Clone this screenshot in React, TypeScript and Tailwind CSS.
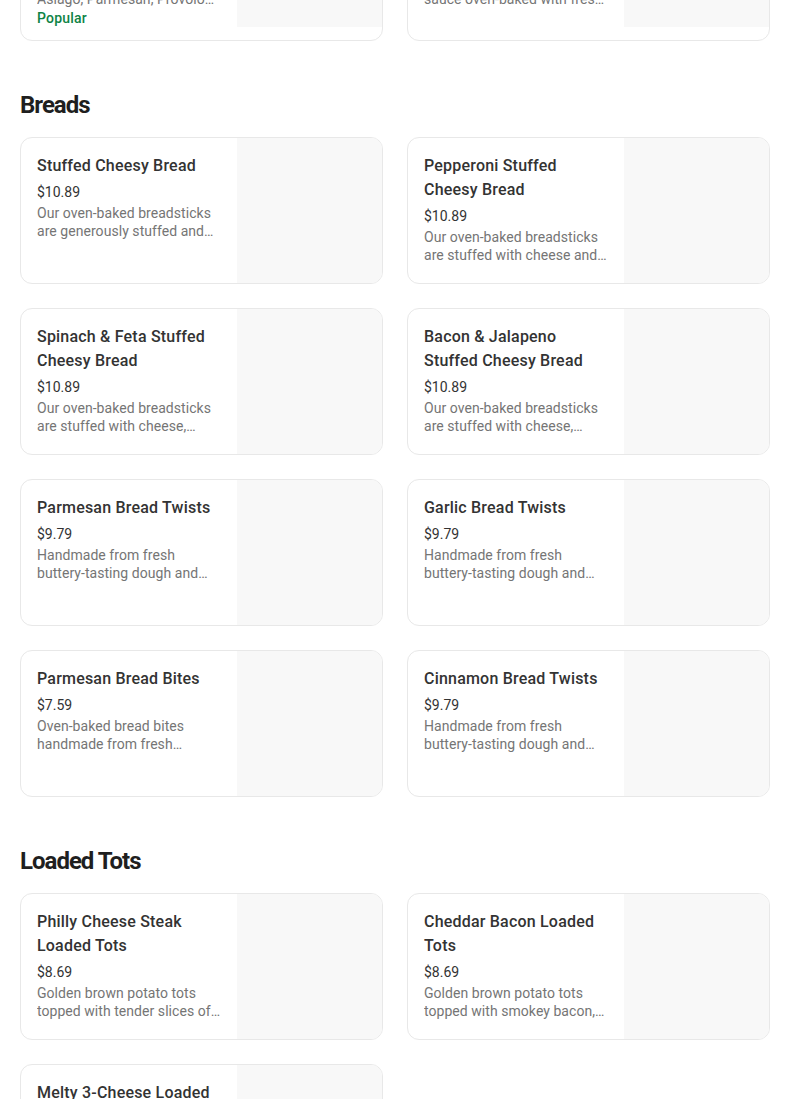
import React from "react";

interface Item {
  name: string;
  price: string;
  description: string;
  popular?: boolean;
}

interface Section {
  title?: string;
  items: Item[];
}

const partialRow: Item[] = [
  {
    name: "Wisconsin 6 Cheese Pizza",
    price: "$19.99",
    description:
      "Feta, mozzarella, cheddar & Asiago, Parmesan, Provolone cheese with oregano",
    popular: true,
  },
  {
    name: "Spinach & Feta Alfredo Pizza",
    price: "$19.99",
    description:
      "Made with a creamy Alfredo sauce oven-baked with fresh baby spinach, onions and feta",
  },
];

const sections: Section[] = [
  {
    title: "Breads",
    items: [
      {
        name: "Stuffed Cheesy Bread",
        price: "$10.89",
        description:
          "Our oven-baked breadsticks are generously stuffed and covered with a blend of 100% real mozzarella",
      },
      {
        name: "Pepperoni Stuffed Cheesy Bread",
        price: "$10.89",
        description:
          "Our oven-baked breadsticks are stuffed with cheese and pepperoni, covered in mozzarella",
      },
      {
        name: "Spinach & Feta Stuffed Cheesy Bread",
        price: "$10.89",
        description:
          "Our oven-baked breadsticks are stuffed with cheese, fresh spinach and feta",
      },
      {
        name: "Bacon & Jalapeno Stuffed Cheesy Bread",
        price: "$10.89",
        description:
          "Our oven-baked breadsticks are stuffed with cheese, smoked bacon and jalapeno peppers",
      },
      {
        name: "Parmesan Bread Twists",
        price: "$9.79",
        description:
          "Handmade from fresh buttery-tasting dough and baked to a golden brown",
      },
      {
        name: "Garlic Bread Twists",
        price: "$9.79",
        description:
          "Handmade from fresh buttery-tasting dough and baked to a golden brown",
      },
      {
        name: "Parmesan Bread Bites",
        price: "$7.59",
        description:
          "Oven-baked bread bites handmade from fresh buttery-tasting dough",
      },
      {
        name: "Cinnamon Bread Twists",
        price: "$9.79",
        description:
          "Handmade from fresh buttery-tasting dough and baked to a golden brown",
      },
    ],
  },
  {
    title: "Loaded Tots",
    items: [
      {
        name: "Philly Cheese Steak Loaded Tots",
        price: "$8.69",
        description:
          "Golden brown potato tots topped with tender slices of steak, onions and peppers",
      },
      {
        name: "Cheddar Bacon Loaded Tots",
        price: "$8.69",
        description:
          "Golden brown potato tots topped with smokey bacon, cheddar and ranch",
      },
      {
        name: "Melty 3-Cheese Loaded Tots",
        price: "$8.69",
        description:
          "Golden brown potato tots topped with a blend of three cheeses",
      },
    ],
  },
];

function MenuCard({ item }: { item: Item }) {
  return (
    <div className="flex min-h-[147px] overflow-hidden rounded-xl border border-[#e8e8e8] bg-white">
      <div className="flex-1 min-w-0 px-4 pt-4 pb-3">
        <div className="text-base leading-6 font-medium tracking-[0.2px] text-[#333]">
          {item.name}
        </div>
        <div className="mt-1 text-sm leading-5 text-[#333]">
          {item.price}
        </div>
        <div className="mt-[2px] text-sm leading-[18px] tracking-[0.05px] text-[#757575] line-clamp-2">
          {item.description}
        </div>
        {item.popular && (
          <div className="text-sm leading-5 font-medium tracking-[0.2px] text-[#0e8345]">
            Popular
          </div>
        )}
      </div>
      <div className="w-[145px] h-[145px] shrink-0 bg-[#f8f8f8]"></div>
    </div>
  );
}

export default function App() {
  return (
    <div
      className="min-h-screen bg-white overflow-hidden"
      style={{ fontFamily: "Roboto, 'Liberation Sans', sans-serif" }}
    >
      <div className="mx-5 max-w-[750px] mt-[-119px] pb-10">
        {/* previous section, scrolled mostly off screen */}
        <div className="grid grid-cols-2 gap-6">
          {partialRow.map((item) => (
            <MenuCard key={item.name} item={item} />
          ))}
        </div>

        {sections.map((section) => (
          <div key={section.title} className="mt-12">
            <h2 className="mb-4 text-2xl leading-8 font-bold tracking-[-1px] text-[#1f1f1f]">
              {section.title}
            </h2>
            <div className="grid grid-cols-2 gap-6">
              {section.items.map((item) => (
                <MenuCard key={item.name} item={item} />
              ))}
            </div>
          </div>
        ))}
      </div>
    </div>
  );
}
